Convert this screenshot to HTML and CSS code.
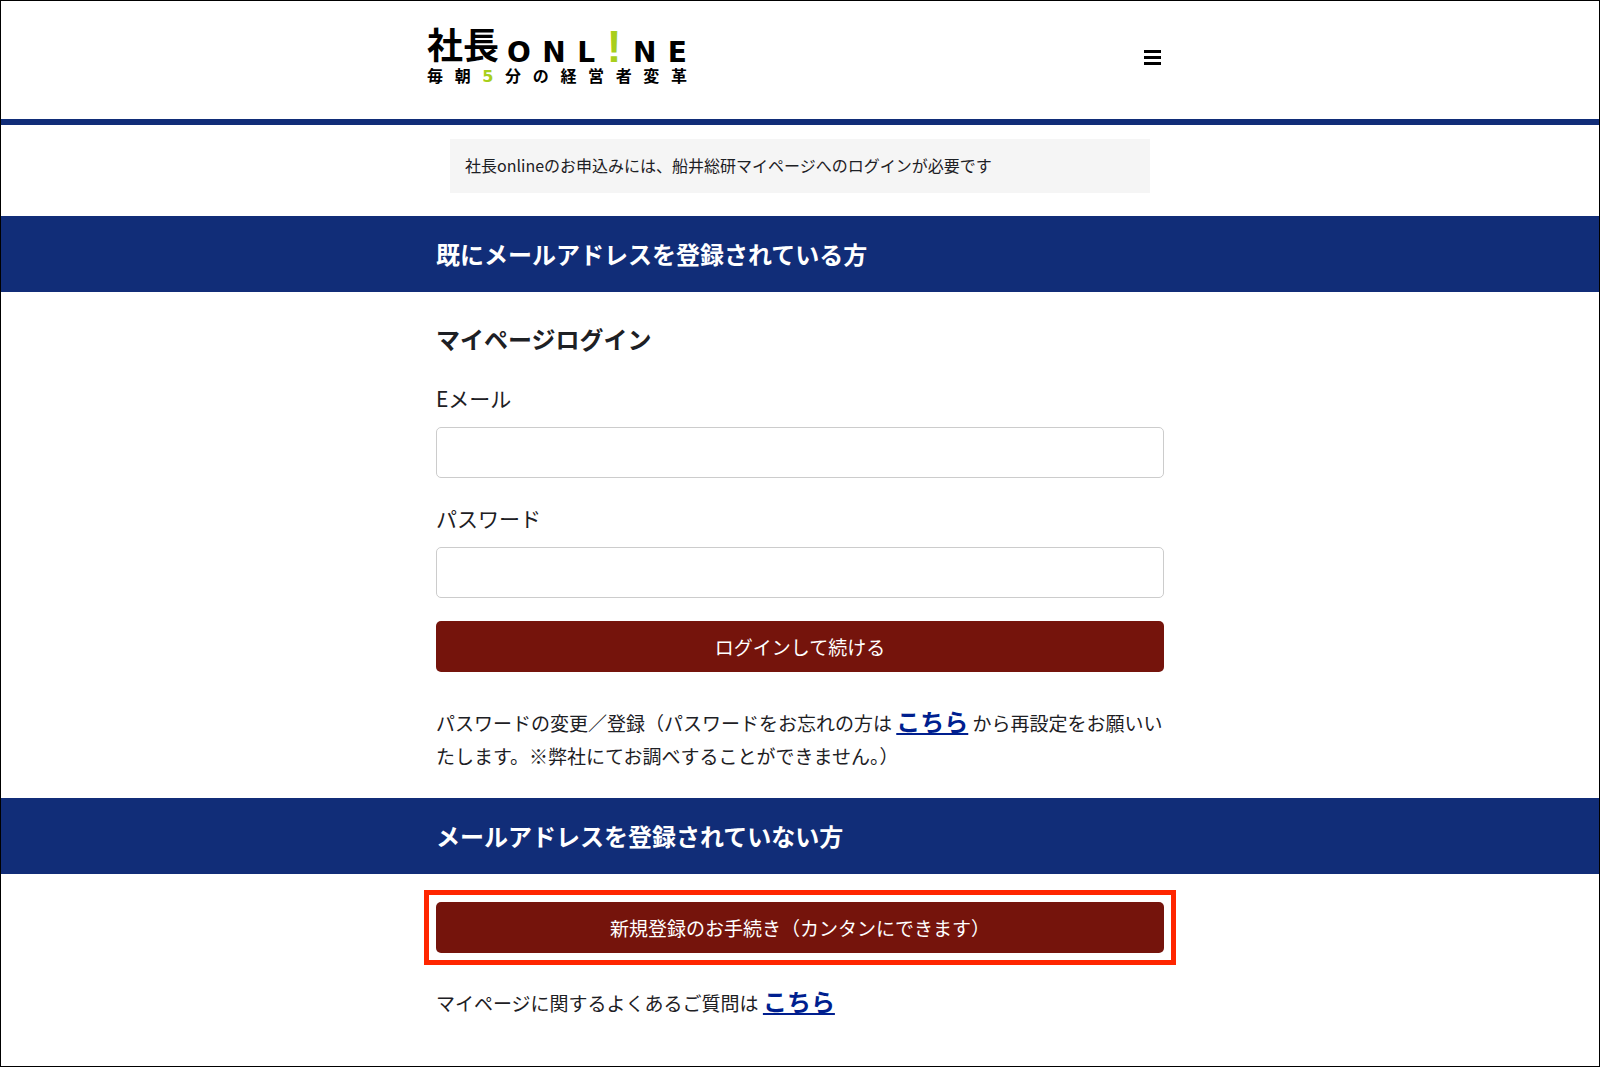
FILE: index.html
```
<!DOCTYPE html>
<html lang="ja">
<head>
    <meta charset="UTF-8">
    <meta name="viewport" content="width=device-width, initial-scale=1.0">
    <title>マイページログイン | 社長online</title>
    <link rel="stylesheet" href="styles.css">
</head>
<body>
    <div class="page">
        <header class="header">
            <div class="header-inner">
                <a class="logo" href="#" aria-label="社長ONLINE">
                    <span class="logo-name">
                        <span class="logo-kanji">社長</span>
                        <span class="logo-online"><span>O</span><span>N</span><span>L</span><span class="logo-mark">!</span><span>N</span><span>E</span></span>
                    </span>
                    <span class="logo-tagline">毎朝<span class="logo-five">5</span>分の経営者変革</span>
                </a>
                <button type="button" class="menu-button" aria-label="メニュー">
                    <svg width="17" height="15" viewBox="0 0 17 15">
                        <path d="M0 0h17v3H0zM0 6h17v3H0zM0 12h17v3H0z"/>
                    </svg>
                </button>
            </div>
        </header>

        <main>
            <p class="notice">社長onlineのお申込みには、船井総研マイページへのログインが必要です</p>

            <div class="banner">
                <h2>既にメールアドレスを登録されている方</h2>
            </div>

            <section class="container login">
                <h3>マイページログイン</h3>
                <form>
                    <label for="email">Eメール</label>
                    <input type="email" id="email" name="email">

                    <label for="password">パスワード</label>
                    <input type="password" id="password" name="password">

                    <button type="submit" class="btn">ログインして続ける</button>
                </form>
                <p class="text">パスワードの変更／登録（パスワードをお忘れの方は <a href="#">こちら</a> から再設定をお願いい<br>たします。※弊社にてお調べすることができません。）</p>
            </section>

            <div class="banner">
                <h2>メールアドレスを登録されていない方</h2>
            </div>

            <div class="highlight">
                <button type="button" class="btn">新規登録のお手続き（カンタンにできます）</button>
            </div>

            <section class="container faq">
                <p class="text">マイページに関するよくあるご質問は <a href="#">こちら</a></p>
            </section>
        </main>
    </div>
</body>
</html>
```
FILE: styles.css
```
* {
    box-sizing: border-box;
}

body {
    margin: 0;
    font-family: "Noto Sans CJK JP", sans-serif;
    color: #1d2024;
    background-color: #fff;
}

h2, h3, p {
    margin: 0;
}

.page {
    min-height: 100vh;
    border: 1px solid #000;
}

/* header */
.header {
    border-bottom: 6px solid #112d78;
}

.header-inner {
    display: flex;
    justify-content: space-between;
    align-items: center;
    max-width: 752px;
    margin: 0 auto;
    padding: 26px 15px 32px 3px;
}

.logo {
    width: 260px;
    font-family: "Liberation Sans", "Noto Sans CJK JP", sans-serif;
    font-weight: bold;
    color: #000;
    text-decoration: none;
}

.logo-name {
    display: flex;
    align-items: center;
    gap: 8px;
    height: 40px;
    line-height: 40px;
}

.logo-kanji {
    font-size: 36px;
}

.logo-online {
    flex: 1;
    display: flex;
    justify-content: space-between;
    align-items: baseline;
    height: 40px;
    font-family: "DejaVu Sans", sans-serif;
    font-size: 28px;
}

.logo-mark {
    font-family: "Liberation Sans", sans-serif;
    font-size: 44px;
    color: #a8cf1c;
}

.logo-tagline {
    display: block;
    font-size: 16px;
    line-height: 20px;
    text-align: justify;
    text-align-last: justify;
}

.logo-five {
    font-family: "DejaVu Sans", sans-serif;
    line-height: 1;
    color: #a8cf1c;
}

.menu-button {
    display: flex;
    padding: 0;
    border: none;
    background: none;
    cursor: pointer;
}

/* layout */
.container {
    max-width: 752px;
    margin: 0 auto;
    padding: 0 12px;
}

.notice {
    max-width: 700px;
    margin: 14px auto 23px;
    padding: 13px 15px 15px;
    font-size: 16px;
    line-height: 26px;
    background-color: #f5f5f5;
}

.banner {
    padding: 20px 0;
    color: #fff;
    background-color: #112d78;
}

.banner h2 {
    max-width: 752px;
    margin: 0 auto;
    padding: 0 12px;
    font-size: 24px;
    line-height: 36px;
}

/* login */
.login {
    padding-top: 29px;
    padding-bottom: 26px;
}

.login h3 {
    margin-bottom: 24px;
    font-size: 24px;
    line-height: 36px;
}

label {
    display: block;
    margin-bottom: 12px;
    font-size: 21px;
    line-height: 34px;
}

input {
    display: block;
    width: 100%;
    height: 51px;
    margin-bottom: 23px;
    padding: 8px 12px;
    font-size: 19px;
    border: 1px solid #ccc;
    border-radius: 5px;
}

.btn {
    display: block;
    width: 100%;
    height: 51px;
    padding: 0 12px;
    font-family: inherit;
    font-size: 19px;
    color: #fff;
    background-color: #75140c;
    border: none;
    border-radius: 5px;
    cursor: pointer;
}

.text {
    font-size: 19px;
    line-height: 33px;
}

.login .text {
    margin-top: 34px;
}

.text a {
    font-size: 24px;
    font-weight: bold;
    line-height: 1;
    color: #001f8f;
}

/* sign up */
.highlight {
    max-width: 752px;
    margin: 16px auto 21px;
    padding: 7px;
    border: 5px solid #ff2600;
}
```
